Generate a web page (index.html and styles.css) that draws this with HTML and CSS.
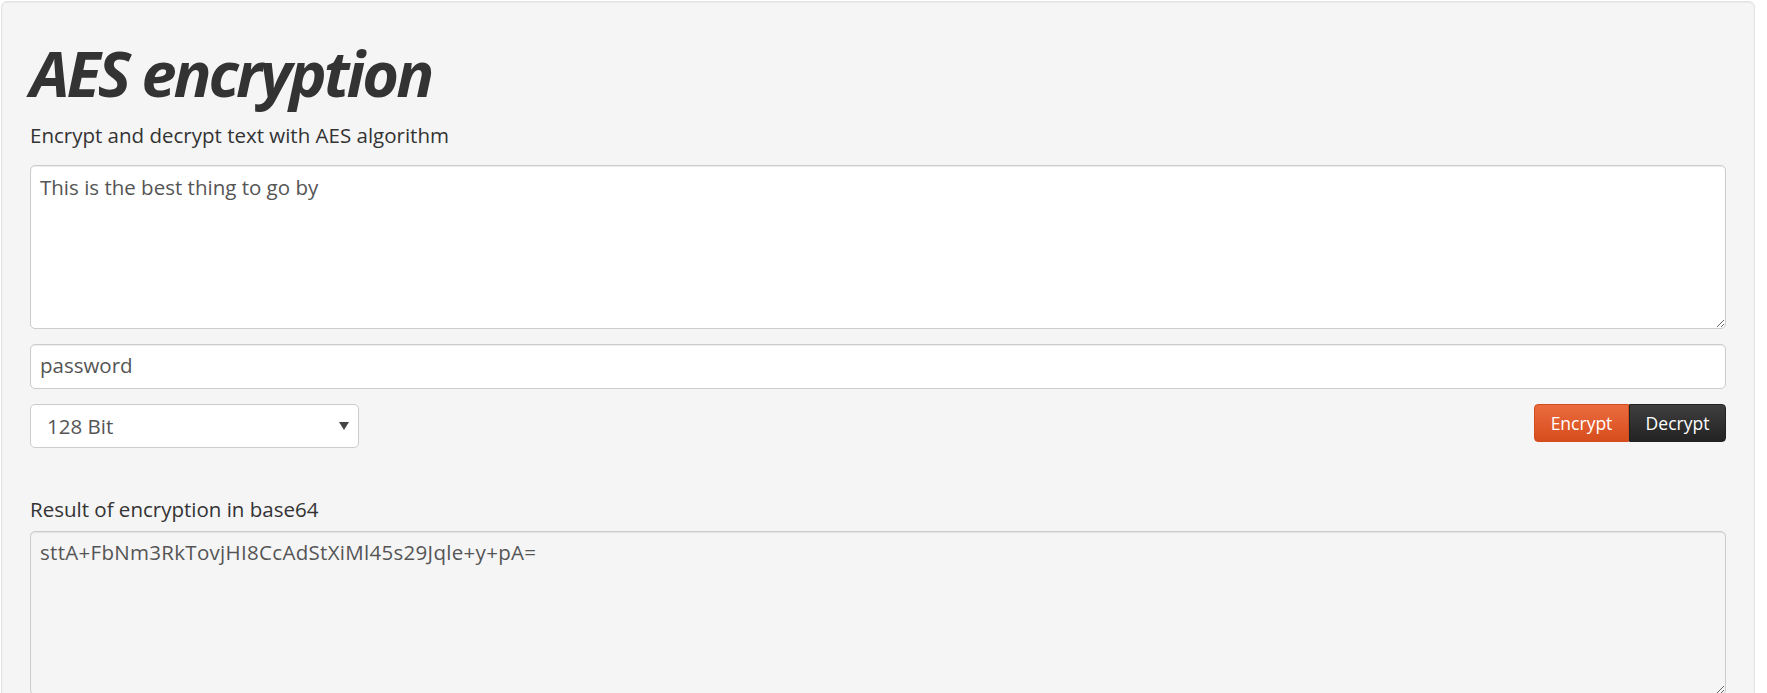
FILE: index.html
```html
<!DOCTYPE html>
<html lang="en">
<head>
<meta charset="utf-8">
<title>AES encryption</title>
<link rel="stylesheet" href="styles.css">
</head>
<body>
<div class="card">
  <h1 class="title">AES encryption</h1>
  <p class="subtitle">Encrypt and decrypt text with AES algorithm</p>
  <textarea class="field area">This is the best thing to go by</textarea>
  <input class="field pass" type="text" value="password">
  <div class="controls">
    <div class="select-wrap">
      <select class="field bits">
        <option>128 Bit</option>
        <option>192 Bit</option>
        <option>256 Bit</option>
      </select>
    </div>
    <div class="btn-group">
      <button class="btn btn-encrypt" type="button">Encrypt</button>
      <button class="btn btn-decrypt" type="button">Decrypt</button>
    </div>
  </div>
  <label class="result-label">Result of encryption in base64</label>
  <textarea class="field area result" readonly>sttA+FbNm3RkTovjHI8CcAdStXiMl45s29Jqle+y+pA=</textarea>
</div>
</body>
</html>
```
FILE: styles.css
```css
* { box-sizing: border-box; }

html, body {
  margin: 0;
  padding: 0;
  background: #ffffff;
}

body {
  font-family: "Open Sans", "DejaVu Sans", sans-serif;
  color: #333333;
  font-size: 20.5px;
  line-height: 28px;
}

.card {
  margin: 1px 0 0 1px;
  width: 1754px;
  padding: 36px 28px 40px 28px;
  background: #f5f5f5;
  border: 1px solid #e3e3e3;
  border-radius: 6px;
  box-shadow: inset 0 1px 1px rgba(0, 0, 0, 0.05);
  display: flex;
  flex-direction: column;
}

.title {
  margin: 0;
  font-size: 63px;
  line-height: 70px;
  font-weight: 700;
  font-style: italic;
  letter-spacing: -3px;
  color: #333333;
}

.subtitle {
  margin: 13px 0 0 0;
  font-size: 20.5px;
  line-height: 28px;
  color: #333333;
}

.field {
  font-family: "Open Sans", "DejaVu Sans", sans-serif;
  font-size: 20.5px;
  line-height: 28px;
  color: #555555;
  background: #ffffff;
  border: 1px solid #cccccc;
  border-radius: 5px;
  box-shadow: inset 0 1px 1px rgba(0, 0, 0, 0.075);
  outline: none;
  width: 100%;
}

.area {
  display: block;
  margin-top: 16px;
  height: 164px;
  padding: 7px 9px;
  resize: vertical;
}

.pass {
  display: block;
  margin-top: 15px;
  height: 45px;
  padding: 6px 9px 9px 9px;
}

.controls {
  margin-top: 15px;
  display: flex;
  justify-content: space-between;
  align-items: flex-start;
}

.select-wrap {
  position: relative;
  width: 329px;
}

.select-wrap::after {
  content: "";
  position: absolute;
  right: 10px;
  top: 18px;
  width: 0;
  height: 0;
  border-left: 5px solid transparent;
  border-right: 5px solid transparent;
  border-top: 8px solid #444444;
  pointer-events: none;
}

.bits {
  display: block;
  height: 44px;
  padding: 0 30px 0 16px;
  -webkit-appearance: none;
  appearance: none;
  box-shadow: none;
}

.btn-group {
  display: flex;
}

.btn {
  font-family: "Open Sans", "DejaVu Sans", sans-serif;
  font-size: 17.5px;
  line-height: 24px;
  color: #ffffff;
  height: 38px;
  padding: 0;
  border: 1px solid transparent;
  cursor: pointer;
}

.btn-encrypt {
  width: 95px;
  background: linear-gradient(to bottom, #eb6b3f, #d74d1c);
  border-color: #d24c1e;
  border-radius: 4px 0 0 4px;
}

.btn-decrypt {
  width: 97px;
  background: linear-gradient(to bottom, #3e3e3e, #232323);
  border-color: #222222;
  border-radius: 0 4px 4px 0;
}

.result-label {
  display: block;
  margin-top: 47px;
  color: #333333;
}

.result {
  margin-top: 8px;
  background: #f5f5f5;
  padding-top: 6px;
  letter-spacing: 0.3px;
}
```
